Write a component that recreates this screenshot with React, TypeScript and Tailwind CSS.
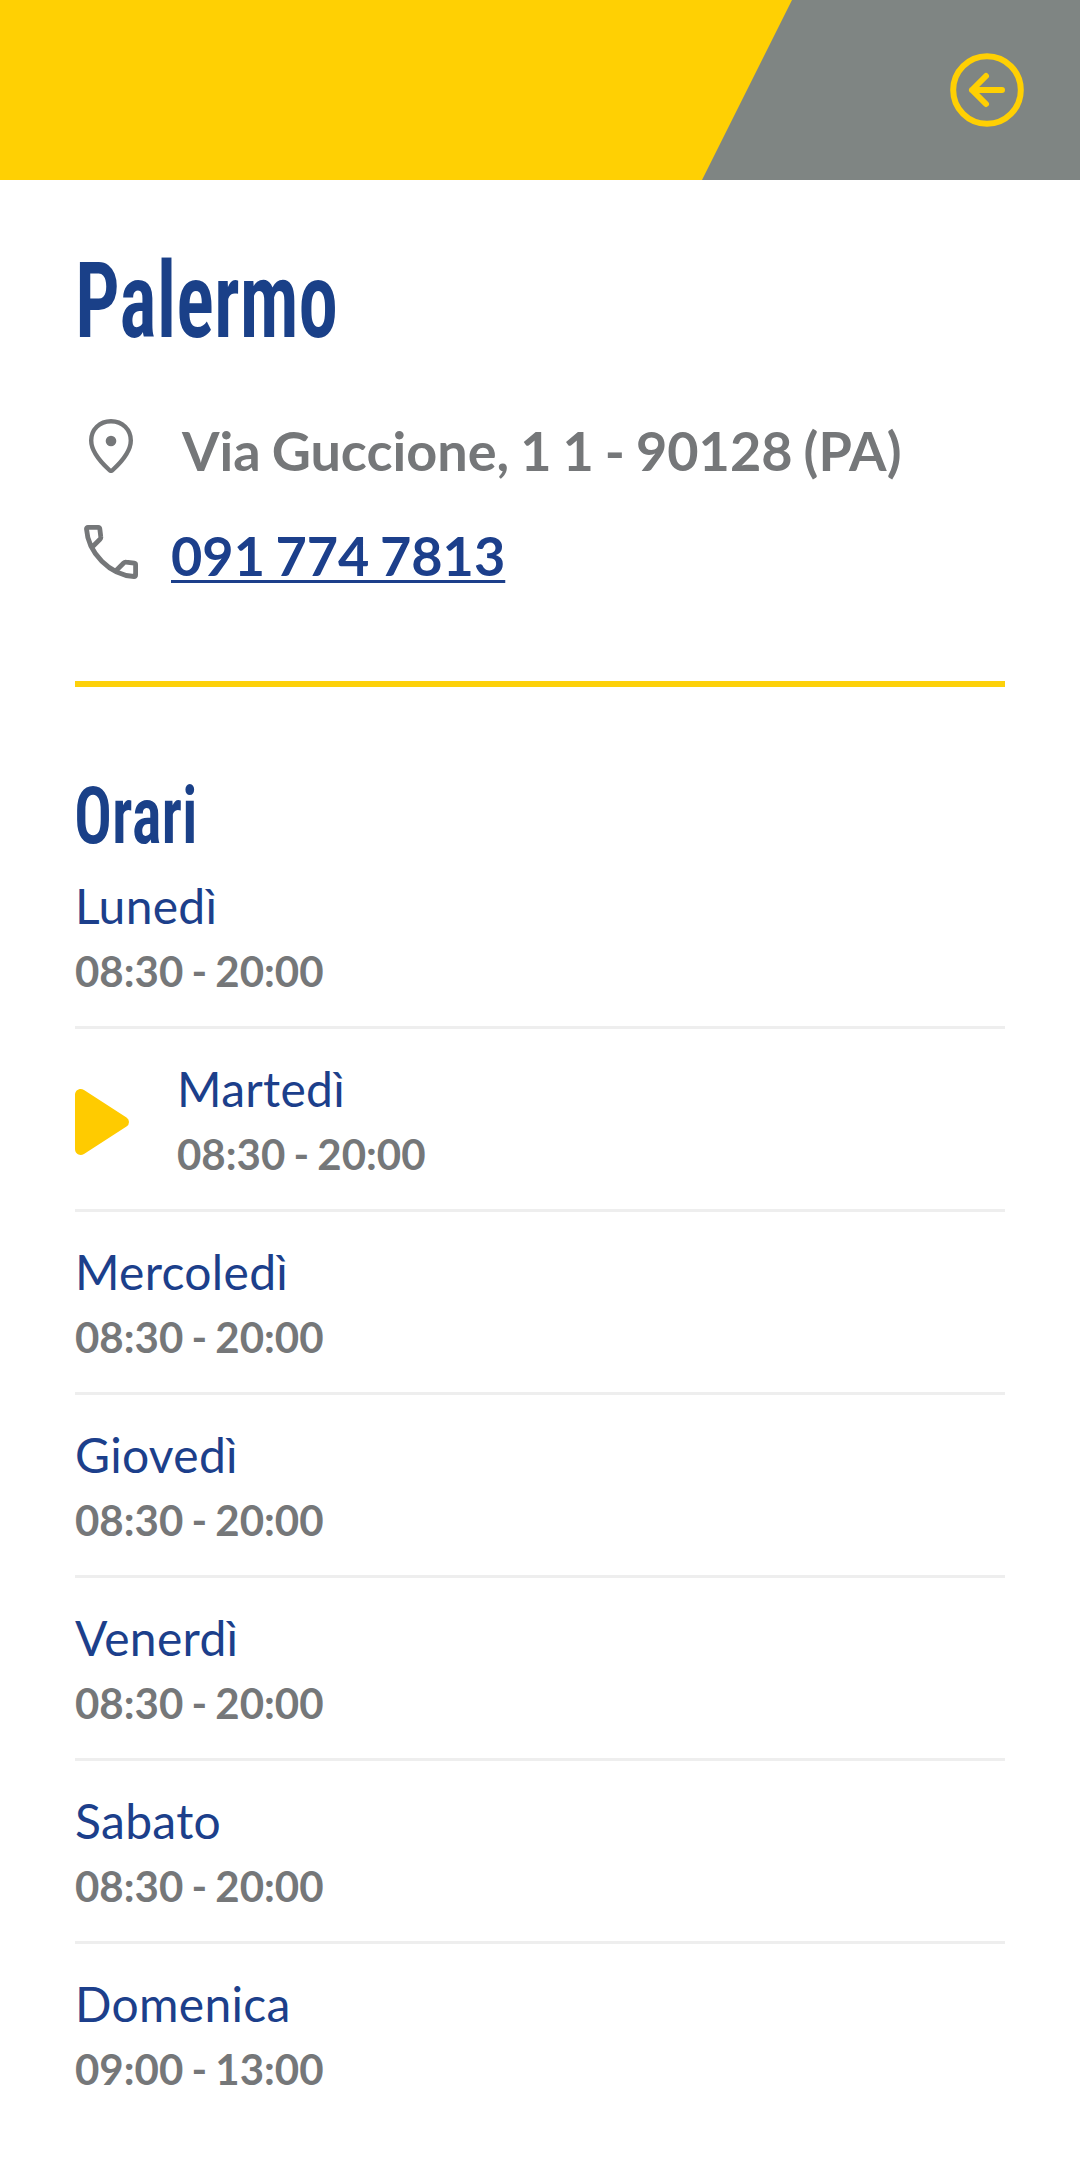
import React from "react";

const days = [
  { name: "Lunedì", hours: "08:30 - 20:00" },
  { name: "Martedì", hours: "08:30 - 20:00", current: true },
  { name: "Mercoledì", hours: "08:30 - 20:00" },
  { name: "Giovedì", hours: "08:30 - 20:00" },
  { name: "Venerdì", hours: "08:30 - 20:00" },
  { name: "Sabato", hours: "08:30 - 20:00" },
  { name: "Domenica", hours: "09:00 - 13:00" },
];

function BackIcon() {
  return (
    <svg className="size-[74px]" viewBox="0 0 74 74" fill="none" stroke="#ffd003" strokeWidth="6" strokeLinecap="round" strokeLinejoin="round">
      <circle cx="37" cy="37" r="33.8" />
      <path d="M52 37H22M36 23L22 37l14 14" />
    </svg>
  );
}

function PinIcon() {
  return (
    <svg className="h-[54px] w-[44px]" viewBox="0 0 44 54" fill="none" stroke="#757779" strokeWidth="4.4" strokeLinejoin="round">
      <path d="M22 2.200C10.500 2.200 2.200 10.500 2.200 21.500C2.200 32.500 11 42.500 20.300 51Q22 52.600 23.700 51C33 42.500 41.800 32.500 41.800 21.500C41.800 10.500 33.500 2.200 22 2.200Z" />
      <circle cx="22" cy="22" r="5.300" fill="#757779" stroke="none" />
    </svg>
  );
}

function PhoneIcon() {
  return (
    <svg className="size-[54px]" viewBox="0 0 54 54" fill="none" stroke="#757779" strokeWidth="4.8" strokeLinejoin="round">
      <path d="M8 22.300L16 14.300Q17 13.300 16.800 12L15.800 3.800Q15.600 2.400 14.300 2.400H4Q2.400 2.400 2.500 4C4 28 26 50 50 51.500Q51.600 51.600 51.600 50V39.700Q51.600 38.400 50.200 38.200L42 37.200Q40.700 37 39.700 38L31.700 46" />
    </svg>
  );
}

function Marker() {
  return (
    <svg className="h-[66px] w-[54px]" viewBox="0 0 54 66" fill="#ffcb00">
      <path d="M0 6C0 1 5 -1.500 9 1L51.500 28.500Q54 30 54 33T51.500 37.500L9 65C5 67.500 0 65 0 60Z" />
    </svg>
  );
}

export default function App() {
  return (
    <div className="h-[2160px] w-[1080px] overflow-hidden bg-white font-['Lato',sans-serif]">
      <header className="relative flex h-[180px] items-center justify-end bg-[#7f8583] pr-[56px]">
        <div className="absolute inset-0 bg-[#ffd003] [clip-path:polygon(0_0,792px_0,702px_100%,0_100%)]" />
        <button className="relative" aria-label="Indietro">
          <BackIcon />
        </button>
      </header>
      <main className="px-[75px]">
        <h1 className="h-[218px] w-max origin-left scale-x-[0.75] pt-[66px] font-['Roboto',sans-serif] text-[105.5px] leading-[110px] font-semibold whitespace-nowrap text-[#1a4088] [font-stretch:75%]">
          Palermo
        </h1>
        <div className="flex h-[104px] text-[54px] leading-[106px] font-bold text-[#757779]">
          <span className="w-[107px] pt-[21px] pl-[14px]">
            <PinIcon />
          </span>
          <p className="whitespace-nowrap [word-spacing:-2.1px]">Via Guccione, 1 1 - 90128 (PA)</p>
        </div>
        <div className="flex h-[104px] text-[54px] leading-[107px] font-bold text-[#1c3f8b]">
          <span className="w-[96px] pt-[23px] pl-[9px]">
            <PhoneIcon />
          </span>
          <a className="whitespace-nowrap underline decoration-[3px] underline-offset-[4px] [text-decoration-skip-ink:none] [word-spacing:-2.6px]">091 774 7813</a>
        </div>
        <div className="mt-[75px] h-[6px] bg-[#fdd10a]" />
        <h2 className="-ml-px h-[159px] w-max origin-left scale-x-[0.79] pt-[86px] font-['Roboto',sans-serif] text-[80px] leading-[86px] font-semibold text-[#1a4088] [font-stretch:75%]">
          Orari
        </h2>
        {days.map((day) => (
          <div key={day.name} className="flex h-[183px] items-center border-b-[3px] border-[#eeeeee] last:border-transparent">
            {day.current && (
              <span className="mr-[48px] pt-[5px]">
                <Marker />
              </span>
            )}
            <div className="pt-[5px]">
              <p className="-mt-px mb-px text-[48px] leading-[65px] tracking-[0.3px] text-[#1c3f8b]">{day.name}</p>
              <p className="text-[42px] leading-[65px] font-bold text-[#757779] [word-spacing:-2px]">{day.hours}</p>
            </div>
          </div>
        ))}
      </main>
    </div>
  );
}
